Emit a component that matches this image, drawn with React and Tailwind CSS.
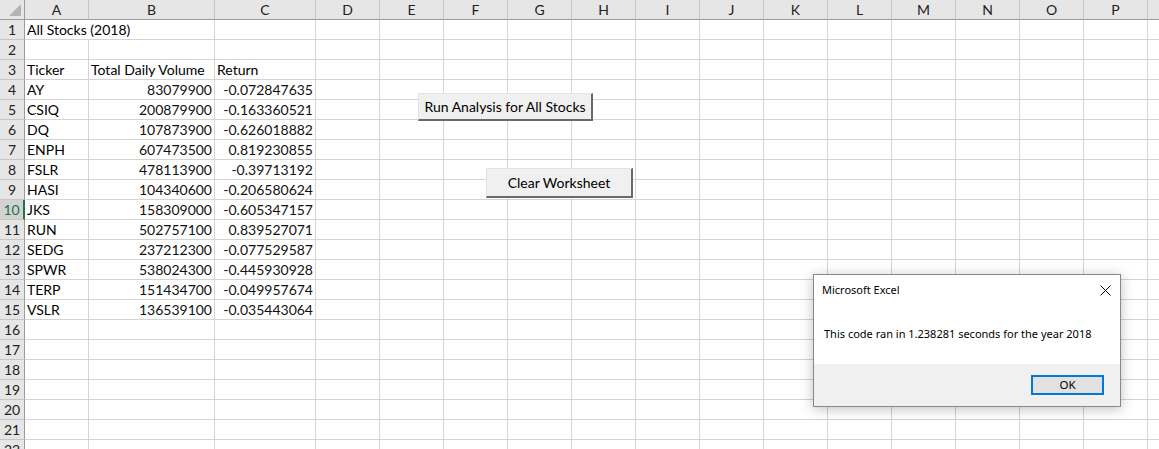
import React from "react";

const COLS = ["A", "B", "C", "D", "E", "F", "G", "H", "I", "J", "K", "L", "M", "N", "O", "P", "Q"];

const STOCKS = [
  ["AY", "83079900", "-0.072847635"],
  ["CSIQ", "200879900", "-0.163360521"],
  ["DQ", "107873900", "-0.626018882"],
  ["ENPH", "607473500", "0.819230855"],
  ["FSLR", "478113900", "-0.39713192"],
  ["HASI", "104340600", "-0.206580624"],
  ["JKS", "158309000", "-0.605347157"],
  ["RUN", "502757100", "0.839527071"],
  ["SEDG", "237212300", "-0.077529587"],
  ["SPWR", "538024300", "-0.445930928"],
  ["TERP", "151434700", "-0.049957674"],
  ["VSLR", "136539100", "-0.035443064"],
];

const cell = "h-5 border-r border-b border-[#d4d4d4] text-[14px] leading-[19px] whitespace-nowrap overflow-hidden";
const num = "text-right pr-[2px] text-[13.3px] text-[#111]";

/* ── one worksheet row ── */
const Row = ({ n, values = [] }) => {
  const active = n === 10;
  const head = n === 3;
  return (
    <>
      <div
        className={
          active
            ? "h-5 border-b border-[#c6c6c6] border-r-2 border-r-[#217346] bg-[#d2d2d2] text-[#217346] text-[14px] leading-[19px] text-center"
            : "h-5 border-b border-[#c6c6c6] border-r border-r-[#9b9b9b] bg-[#e6e6e6] text-[#222] text-[14px] leading-[19px] text-center"
        }
      >
        {n}
      </div>
      {n === 1 ? (
        <div className={`${cell} col-span-2 pl-[2px]`}>All Stocks (2018)</div>
      ) : (
        <>
          <div className={`${cell} pl-[2px]`}>{values[0]}</div>
          <div className={`${cell} ${head ? "pl-[2px]" : num}`}>{values[1]}</div>
        </>
      )}
      <div className={`${cell} ${head ? "pl-[2px]" : num}`}>{values[2]}</div>
      {COLS.slice(3).map((c) => (
        <div key={c} className={cell} />
      ))}
    </>
  );
};

const XlButton = ({ className, children }) => (
  <button
    type="button"
    className={`absolute bg-[#f0f0f0] border-t border-l border-t-[#e3e3e3] border-l-[#e3e3e3] border-r-2 border-b-2 border-r-[#696969] border-b-[#696969] text-[14px] text-black ${className}`}
  >
    {children}
  </button>
);

export default function App() {
  const rows = [];
  for (let n = 1; n <= 22; n++) {
    let values = [];
    if (n === 3) values = ["Ticker", "Total Daily Volume", "Return"];
    if (n >= 4 && n <= 15) values = STOCKS[n - 4];
    rows.push(<Row key={n} n={n} values={values} />);
  }

  return (
    <div
      className="relative w-[1159px] h-[449px] overflow-hidden bg-white text-black"
      style={{ fontFamily: "Lato, 'Liberation Sans', sans-serif" }}
    >
      <div className="grid grid-cols-[25px_64px_126px_101px_repeat(13,64px)_64px] auto-rows-[20px]">
        {/* corner */}
        <div className="relative h-5 bg-[#e6e6e6] border-r border-b border-[#9b9b9b]">
          <svg className="absolute right-[3px] bottom-[3px]" width="12" height="12" viewBox="0 0 12 12">
            <polygon points="12,0 12,12 0,12" fill="#b4b4b4" />
          </svg>
        </div>
        {COLS.map((c) => (
          <div
            key={c}
            className="h-5 bg-[#e6e6e6] border-r border-r-[#c6c6c6] border-b border-b-[#9b9b9b] text-center text-[14px] leading-[19px] text-[#222]"
          >
            {c}
          </div>
        ))}
        {rows}
      </div>

      <XlButton className="left-[418px] top-[93px] w-[175px] h-[28px]">Run Analysis for All Stocks</XlButton>
      <XlButton className="left-[486px] top-[168px] w-[147px] h-[30px]">Clear Worksheet</XlButton>

      {/* message box */}
      <div
        className="absolute left-[813px] top-[274px] w-[308px] h-[133px] bg-white border border-[#888] shadow-[0_2px_12px_rgba(0,0,0,0.25)] flex flex-col"
        style={{ fontFamily: "'Noto Sans', 'Open Sans', sans-serif" }}
      >
        <div className="h-[30px] flex items-center justify-between pl-2 pr-[9px]">
          <span className="text-[11px] text-black">Microsoft Excel</span>
          <svg width="11" height="11" viewBox="0 0 11 11" stroke="#000" strokeWidth="1" fill="none">
            <path d="M0.5 0.5L10.5 10.5M10.5 0.5L0.5 10.5" />
          </svg>
        </div>
        <div className="h-[59px] flex items-center pl-[10px] text-[11px] text-black">
          This code ran in 1.238281 seconds for the year 2018
        </div>
        <div className="flex-1 bg-[#f0f0f0] flex items-center justify-end pr-4">
          <button
            type="button"
            className="w-[73px] h-[20px] bg-[#e1e1e1] border-2 border-[#0078d7] text-[11.5px] leading-none text-black"
          >
            OK
          </button>
        </div>
      </div>
    </div>
  );
}
